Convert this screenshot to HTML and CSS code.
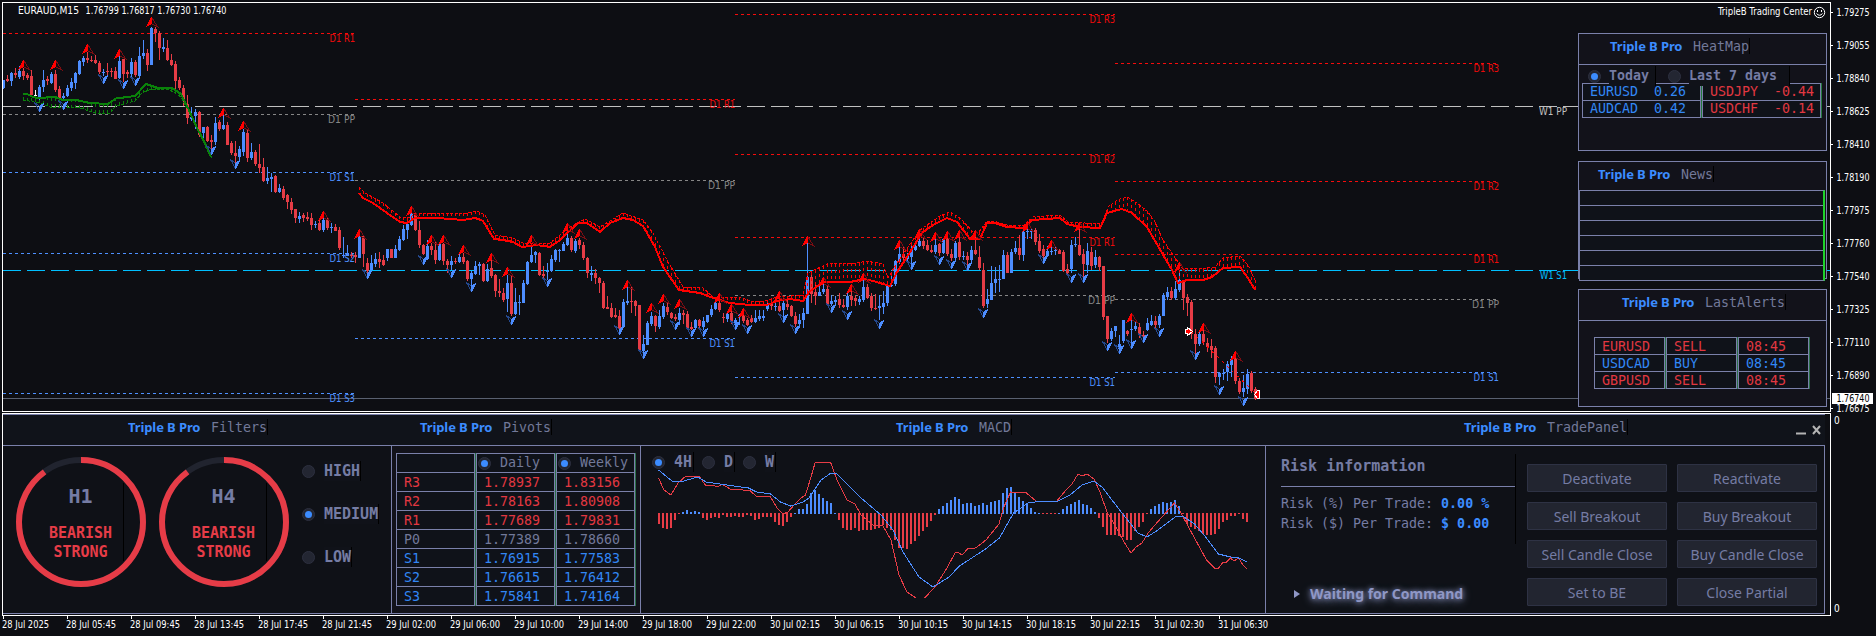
FILE: index.html
```html
<!DOCTYPE html>
<html lang="en">
  <head>
    <meta charset="UTF-8" />
    <meta name="viewport" content="width=device-width, initial-scale=1.0" />
    <title>EURAUD,M15</title>
    <link rel="stylesheet" href="styles.css">
  </head>
  <body>
    <div class="screen">
      <svg class="chart" id="chart" width="1876" height="413"></svg>

      <aside class="widgets">
        <section class="widget heatmap">
          <h2 class="title"><b>Triple B Pro</b><span>HeatMap</span></h2>
          <div class="heat-body">
            <div class="radios">
              <label class="option"><i class="radio on"></i><span>Today</span></label>
              <label class="option"><i class="radio"></i><span>Last 7 days</span></label>
            </div>
            <div class="heat-table">
              <div class="heat-col up">
                <p><span>EURUSD</span><span>0.26</span></p>
                <p><span>AUDCAD</span><span>0.42</span></p>
              </div>
              <div class="heat-col down">
                <p><span>USDJPY</span><span>-0.44</span></p>
                <p><span>USDCHF</span><span>-0.14</span></p>
              </div>
            </div>
          </div>
        </section>

        <section class="widget news">
          <h2 class="title"><b>Triple B Pro</b><span>News</span></h2>
          <div class="news-table">
            <p></p><p></p><p></p><p></p><p></p><p></p>
          </div>
        </section>

        <section class="widget alerts">
          <h2 class="title"><b>Triple B Pro</b><span>LastAlerts</span></h2>
          <div class="alerts-body">
            <div class="alert-col">
              <p class="down">EURUSD</p><p class="up">USDCAD</p><p class="down">GBPUSD</p>
            </div>
            <div class="alert-col">
              <p class="down">SELL</p><p class="up">BUY</p><p class="down">SELL</p>
            </div>
            <div class="alert-col">
              <p class="down">08:45</p><p class="up">08:45</p><p class="down">08:45</p>
            </div>
          </div>
        </section>
      </aside>

      <div class="lower">
        <main class="dock">
          <section class="panel filters">
            <h2 class="title"><b>Triple B Pro</b><span>Filters</span></h2>
            <div class="panel-body">
              <div class="gauge">
                <svg width="130" height="130" viewBox="0 0 130 130">
                  <circle class="track" cx="65" cy="65" r="62" />
                  <circle class="value" cx="65" cy="65" r="62" pathLength="100" transform="rotate(-90 65 65)" />
                </svg>
                <div class="gauge-text"><strong>H1</strong><span>BEARISH</span><span>STRONG</span></div>
              </div>
              <div class="gauge">
                <svg width="130" height="130" viewBox="0 0 130 130">
                  <circle class="track" cx="65" cy="65" r="62" />
                  <circle class="value" cx="65" cy="65" r="62" pathLength="100" transform="rotate(-90 65 65)" />
                </svg>
                <div class="gauge-text"><strong>H4</strong><span>BEARISH</span><span>STRONG</span></div>
              </div>
              <div class="levels">
                <label class="option"><i class="radio"></i><span>HIGH</span></label>
                <label class="option"><i class="radio on"></i><span>MEDIUM</span></label>
                <label class="option"><i class="radio"></i><span>LOW</span></label>
              </div>
            </div>
          </section>

          <section class="panel pivots">
            <h2 class="title"><b>Triple B Pro</b><span>Pivots</span></h2>
            <div class="panel-body">
              <div class="pivot-col">
                <p></p>
                <p class="down">R3</p><p class="down">R2</p><p class="down">R1</p>
                <p>P0</p>
                <p class="up">S1</p><p class="up">S2</p><p class="up">S3</p>
              </div>
              <div class="pivot-col">
                <p class="head"><i class="radio on"></i>Daily</p>
                <p class="down">1.78937</p><p class="down">1.78163</p><p class="down">1.77689</p>
                <p>1.77389</p>
                <p class="up">1.76915</p><p class="up">1.76615</p><p class="up">1.75841</p>
              </div>
              <div class="pivot-col">
                <p class="head"><i class="radio on"></i>Weekly</p>
                <p class="down">1.83156</p><p class="down">1.80908</p><p class="down">1.79831</p>
                <p>1.78660</p>
                <p class="up">1.77583</p><p class="up">1.76412</p><p class="up">1.74164</p>
              </div>
            </div>
          </section>

          <section class="panel macd">
            <h2 class="title"><b>Triple B Pro</b><span>MACD</span></h2>
            <div class="panel-body">
              <div class="radios">
                <label class="option"><i class="radio on"></i><span>4H</span></label>
                <label class="option"><i class="radio"></i><span>D</span></label>
                <label class="option"><i class="radio"></i><span>W</span></label>
              </div>
              <svg id="macd" width="624" height="167" viewBox="641 446 624 167"></svg>
            </div>
          </section>

          <section class="panel trade">
            <h2 class="title">
              <b>Triple B Pro</b><span>TradePanel</span>
              <svg class="window-buttons" width="28" height="14" viewBox="0 0 28 14">
                <path d="M1 10.5H11" stroke-width="2" />
                <path d="M18 3L25 11M25 3L18 11" stroke-width="2" />
              </svg>
            </h2>
            <div class="panel-body">
              <div class="risk">
                <div class="risk-box">
                  <h3>Risk information</h3>
                  <p>Risk (%) Per Trade: <b>0.00 %</b></p>
                  <p>Risk ($) Per Trade: <b>$ 0.00</b></p>
                </div>
                <div class="status">
                  <svg width="7" height="8"><path d="M0 0L6 4L0 8Z" /></svg>
                  <span>Waiting for Command</span>
                </div>
              </div>
              <div class="actions">
                <button>Deactivate</button><button>Reactivate</button>
                <button>Sell Breakout</button><button>Buy Breakout</button>
                <button>Sell Candle Close</button><button>Buy Candle Close</button>
                <button>Set to BE</button><button>Close Partial</button>
              </div>
            </div>
          </section>
        </main>
        <div class="scale"><span>0</span><span>0</span></div>
      </div>

      <svg class="time-axis" id="time" width="1876" height="20"></svg>
    </div>
    <script src="chart.js"></script>
  </body>
</html>
```
FILE: styles.css
```css
* {
  box-sizing: border-box;
}
body {
  margin: 0;
  background: #0d0e13;
  font-family: "Noto Sans", "Open Sans", sans-serif;
}
p,
h2,
h3 {
  margin: 0;
  font-weight: normal;
}
.screen {
  position: relative;
  width: 1876px;
  height: 636px;
  overflow: hidden;
}
.chart,
.time-axis {
  display: block;
}
.chart text,
.time-axis text {
  font: 10px "DejaVu Sans Condensed", "DejaVu Sans", sans-serif;
  fill: #fff;
}
.chart .r {
  fill: #f00a0a;
}
.chart .s {
  fill: #4d90ff;
}
.chart .pp {
  fill: #868686;
}
.chart .wpp {
  fill: #c0c0c0;
}
.chart .ws {
  fill: #00bfff;
}
.chart .price-now {
  fill: #000;
}

/* shared bits */
.up {
  color: #3287f5;
}
.down {
  color: #e23841;
}
.title {
  display: flex;
  align-items: center;
  font-size: 13px;
}
.title b {
  width: 83px;
  color: #3c8cff;
  letter-spacing: -0.1px;
  white-space: nowrap;
}
.title span {
  height: 16px;
  font: 13.3px/17px "DejaVu Sans Mono", monospace;
  color: #727999;
  border-right: 1px solid #000;
}
.radio {
  flex: none;
  display: flex;
  align-items: center;
  justify-content: center;
  width: 13px;
  height: 13px;
  border-radius: 50%;
  background: #232632;
  border: 1px solid #2d3040;
}
.radio.on::after {
  content: "";
  width: 7px;
  height: 7px;
  border-radius: 50%;
  background: #3c8cff;
}
.option {
  display: flex;
  align-items: center;
  font: bold 15px/20px "DejaVu Sans Mono", monospace;
  color: #757ca4;
}
.option span {
  margin-left: 9px;
  border-right: 1px solid #000;
  background: #101219;
}

/* widgets over the chart */
.widgets {
  position: absolute;
  left: 1578px;
  top: 33px;
  width: 249px;
}
.widget {
  border: 1px solid #7a80aa;
  background: #12121a;
}
.widget .title {
  height: 30px;
}
.heatmap {
  height: 118px;
}
.heatmap .title {
  padding: 0 0 7px 31px;
}
.heat-body {
  border-top: 1px solid #7a80aa;
  padding: 1px 3px 0;
}
.heat-body .radios {
  position: relative;
  display: flex;
  padding-left: 6px;
  gap: 12px;
}
.heat-body .option {
  font-size: 13.3px;
}
.heat-body .option span {
  margin-left: 8px;
  padding-right: 6px;
}
.heat-body .option:last-child span {
  padding-right: 12px;
}
.heat-table {
  display: flex;
  width: 240px;
  gap: 1px;
  margin-top: -3px;
  background: #237a3c;
  border-right: 1px solid #237a3c;
}
.heat-col,
.alert-col,
.pivot-col {
  font: 13.3px/16px "DejaVu Sans Mono", monospace;
  border: 1px solid #7a80aa;
  background: #0f1219;
}
.heat-col {
  flex: 1;
}
.heat-col p {
  display: flex;
  justify-content: space-between;
  height: 16px;
  padding: 0 14px 0 7px;
}
.heat-col.down p {
  padding-right: 6px;
}
.heat-col p + p,
.alert-col p + p,
.pivot-col p + p {
  height: 17px;
  border-top: 1px solid #7a80aa;
}
.news {
  margin-top: 10px;
  height: 118px;
}
.news .title {
  height: 28px;
  padding: 0 0 4px 19px;
}
.news-table {
  width: 246px;
  border: 1px solid #7a80aa;
  border-right: 2px solid #1ed22a;
  background: #0f1219;
}
.news-table p {
  height: 14px;
}
.news-table p + p {
  height: 15px;
  border-top: 1px solid #7a80aa;
}
.alerts {
  margin-top: 10px;
  height: 118px;
}
.alerts .title {
  padding: 0 0 6px 43px;
}
.alerts-body {
  display: flex;
  gap: 1px;
  height: 86px;
  padding: 16px 17px 17px 15px;
  border-top: 1px solid #7a80aa;
}
.alert-col {
  width: 71px;
  height: 52px;
}
.alert-col,
.pivot-col {
  box-shadow: 1px 0 #2a7048;
}
.alert-col p {
  height: 16px;
  padding-left: 7px;
  line-height: 17px;
}

/* lower terminal */
.lower {
  display: flex;
}
.dock {
  display: flex;
  width: 1829px;
  height: 203px;
  margin-left: 2px;
  border: 1px solid #fff;
}
.panel .title {
  height: 32px;
  padding-bottom: 6px;
  border-top: 1px solid #7a80aa;
  border-bottom: 1px solid #7a80aa;
  background: #10131a;
}
.panel-body {
  position: relative;
  display: flex;
  height: 168px;
  border-right: 1px solid #7a80aa;
  border-bottom: 1px solid #7a80aa;
  background: #0f1117;
}
.filters {
  width: 389px;
}
.filters .title {
  padding-left: 125px;
}
.filters .panel-body {
  padding: 11px 0 0 13px;
  gap: 13px;
}
.gauge {
  position: relative;
  width: 130px;
  height: 130px;
}
.gauge circle {
  fill: none;
  stroke-width: 6;
}
.gauge .track {
  stroke: #21242f;
}
.gauge .value {
  stroke: #e63c47;
  stroke-dasharray: 90 100;
}
.gauge-text {
  position: absolute;
  top: 26px;
  left: 22px;
  width: 86px;
  height: 78px;
  display: flex;
  flex-direction: column;
  align-items: center;
  border-right: 1px solid #000;
  font: bold 15px/19px "DejaVu Sans Mono", monospace;
  color: #e63c47;
}
.gauge-text strong {
  margin: 1px 0 16px;
  font-size: 20px;
  line-height: 24px;
  color: #757ca4;
}
.levels {
  display: flex;
  flex-direction: column;
  gap: 23px;
  padding-top: 4px;
}
.pivots {
  width: 249px;
}
.pivots .title {
  padding-left: 28px;
}
.pivots .panel-body {
  gap: 1px;
  padding: 7px 4px;
  background: #12121a;
}
.pivot-col {
  width: 79px;
  height: 153px;
  font-size: 13.3px;
  line-height: 20px;
  color: #727999;
}
.pivot-col p {
  height: 18px;
  padding-left: 7px;
}
.pivot-col p + p {
  height: 19px;
}
.pivot-col .head {
  display: flex;
  align-items: center;
  gap: 9px;
  padding-left: 1px;
}
.macd {
  width: 625px;
}
.macd .title {
  padding-left: 255px;
}
.macd .radios {
  position: absolute;
  top: 6px;
  left: 11px;
  display: flex;
  gap: 8px;
}
.macd .option span {
  padding-right: 1px;
}
.macd svg {
  display: block;
}
.trade {
  width: 559px;
}
.trade .title {
  padding-left: 198px;
}
.window-buttons {
  margin: 6px 2px 0 auto;
  fill: none;
  stroke: #b4b4b4;
}
.trade .panel-body {
  padding: 8px 7px 10px 15px;
}
.risk {
  display: flex;
  flex-direction: column;
  justify-content: space-between;
  width: 246px;
}
.risk-box {
  width: 235px;
  height: 90px;
  border-right: 1px solid #000;
  font: 13.3px/20px "DejaVu Sans Mono", monospace;
  color: #757ca4;
}
.risk-box h3 {
  height: 33px;
  margin-bottom: 7px;
  border-bottom: 1px solid #7a80aa;
  font: bold 15px/24px "DejaVu Sans Mono", monospace;
}
.risk-box b {
  color: #3c8cff;
}
.status {
  display: flex;
  align-items: center;
  gap: 9px;
  padding: 0 0 0 13px;
  font-size: 14px;
  font-weight: bold;
  line-height: 18px;
  color: #8f97c6;
}
.status svg {
  fill: #8f97c6;
}
.status span {
  text-shadow: 0 0 5px #7a80aa, 0 2px 8px #7a80aa;
}
.actions {
  display: grid;
  grid-template-columns: 140px 140px;
  grid-auto-rows: 28px;
  gap: 10px;
  padding-top: 10px;
}
.actions button {
  padding: 0;
  border: 1px solid #2e3244;
  border-radius: 1px;
  background: #222530;
  color: #757ca4;
  font: 14px "Noto Sans", sans-serif;
}
.scale {
  display: flex;
  flex-direction: column;
  justify-content: space-between;
  height: 203px;
  padding: 2px 0 1px 3px;
  font: 10px/12px "DejaVu Sans Condensed", sans-serif;
  color: #fff;
}
```
FILE: chart.js
```js
const BLUE = "#4d8dff";
const RED = "#e63c46";

// one candle per entry: direction, high, body top, body bottom, low
const candles = `
u80,80,88,89 d75,79,81,82 u72,73,81,86 d68,73,75,78 u66,71,77,79 d68,71,76,80 d73,75,78,80 d70,76,95,97 w90,95,96,102 u85,87,97,100
u70,80,87,92 d76,79,81,85 u72,74,83,84 d70,74,90,92 d86,89,98,99 u93,96,98,101 u85,88,96,97 u78,82,88,91 u72,73,83,89 u60,61,74,75
u56,58,62,66 d52,58,60,63 d56,60,61,62 d55,60,63,64 d61,63,72,74 u69,72,73,76 d63,71,72,76 d68,71,72,77 d67,71,79,79 u55,61,78,79
d59,59,74,82 d70,72,74,78 u58,62,74,77 d60,62,75,77 u47,56,76,77 u40,53,56,59 d49,53,65,71 u27,28,65,65 d27,29,33,42 d31,33,48,60
u38,47,49,52 d40,48,60,61 d54,60,65,66 d61,64,81,89 d77,80,88,90 d85,88,101,106 d95,104,118,124 u107,117,119,121 u109,112,116,129 d111,112,135,137
u127,127,133,143 d126,127,141,142 d135,140,142,150 u117,123,142,145 d120,122,129,131 u114,125,129,130 d122,125,145,145 d141,143,153,155 d141,153,156,166 u146,149,157,162
u129,132,152,156 d130,133,158,162 u143,152,158,160 d150,152,164,166 d144,164,168,173 d158,167,181,182 u167,178,181,184 u173,177,179,192 d175,176,192,193 u184,188,192,193
d186,189,198,200 d194,195,202,209 d198,202,210,214 d209,209,218,223 u212,216,219,223 d213,215,218,222 d212,217,219,221 d213,218,225,230 u221,224,225,228 d219,223,230,231
u217,220,230,232 d218,219,228,230 u223,227,228,233 d224,227,231,231 d227,230,248,250 u237,255,256,258 u245,253,256,256 d252,255,256,258 d252,255,257,263 u234,236,258,258
d236,236,254,267 d258,263,271,276 u255,263,270,271 u253,259,264,267 d252,259,262,268 d255,260,265,266 u249,249,258,261 d249,249,258,258 u245,249,258,258 u236,239,250,251
u225,229,240,241 u223,224,230,239 u212,213,225,226 d212,213,230,231 d221,230,245,248 d244,245,254,255 u240,246,259,260 d243,246,250,255 d241,250,260,264 u243,244,260,261
d243,244,261,265 d259,261,265,273 u256,261,265,270 d258,261,262,264 u253,257,262,263 d253,257,262,264 d260,261,279,281 u271,273,279,286 u261,266,274,275 u262,264,266,275
d263,264,281,282 u264,269,281,282 d259,268,276,278 d274,275,291,297 d279,291,293,297 d288,293,300,302 u275,283,299,312 d275,283,314,316 u288,302,314,315 u295,302,303,315
u280,283,303,303 u261,262,284,285 u247,255,262,263 u251,252,255,263 d252,253,275,276 d266,274,276,280 u263,271,272,280 u255,259,271,272 u249,250,260,262 u249,250,251,262
u242,244,251,251 u233,238,245,246 d236,238,250,252 u239,241,251,253 d238,240,245,249 d242,245,258,260 d257,258,273,278 u266,273,275,281 d269,273,278,284 d277,278,283,293
d281,283,308,309 d296,307,309,309 d303,308,317,318 d308,315,317,318 d310,316,328,330 u299,302,327,328 u286,301,303,305 d287,301,302,313 d300,301,306,316 d305,305,351,352
u335,344,351,355 u321,323,345,345 u312,316,324,326 d315,316,326,332 u310,316,327,329 u303,306,317,319 d303,307,312,315 d312,313,318,319 d314,317,319,321 u308,313,320,325
d310,313,315,324 d311,314,328,330 d322,327,329,330 u319,320,328,330 d319,320,326,329 u317,321,327,330 u315,315,322,323 u305,309,315,317 u301,303,309,310 d301,303,310,312
d313,317,318,323 u311,314,319,322 d310,313,321,324 u318,320,325,326 u314,315,316,325 d314,315,321,323 d318,320,325,326 d315,318,322,323 u310,318,322,323 u310,316,319,321
u310,316,318,321 u303,304,309,311 d301,304,306,310 u303,306,307,311 d300,306,311,312 u300,303,310,318 d300,304,307,310 d305,306,316,317 d312,316,324,327 u314,320,324,328
u308,313,320,328 u241,277,314,314 d275,277,294,303 d285,292,296,305 u283,292,296,296 u281,289,292,294 d286,289,304,304 u295,301,304,306 u296,300,302,305 d293,299,305,308
d299,305,307,308 u293,296,307,310 d290,296,300,306 d295,298,301,306 u296,299,302,305 u280,287,300,302 d284,287,298,299 d293,296,308,311 d294,308,309,310 u295,306,308,320
u291,303,307,314 u285,286,303,306 u273,285,286,287 u260,261,284,286 u245,254,262,264 d246,254,258,260 u253,256,259,262 u246,250,257,264 u242,246,250,251 u234,241,246,247
d237,241,246,249 d240,245,250,251 d245,250,252,253 u236,245,252,254 d243,244,253,256 u238,239,253,254 d237,239,254,256 d249,254,258,261 u241,243,258,260 d236,242,257,260
u251,256,257,260 d252,256,260,265 u246,250,260,262 d236,250,254,255 d246,257,268,270 d263,270,306,308 u289,299,304,308 u266,283,300,300 u267,279,283,293 u265,279,280,292
u250,255,279,279 d252,255,273,273 u249,252,273,273 u241,248,252,254 d235,248,255,260 u229,232,255,261 u225,231,232,239 u228,230,232,239 d228,230,242,245 d234,241,251,253
d245,249,256,260 u246,251,256,257 u247,251,252,255 u246,250,251,255 d249,250,254,254 d250,252,271,272 d264,269,273,274 u240,245,269,273 u237,244,245,247 d229,245,255,256
d249,254,264,277 u243,251,265,273 d247,252,266,270 u250,257,265,268 d256,257,267,271 d266,266,317,320 d316,316,339,343 u328,331,339,341 u326,326,331,337 u335,344,349,350
u320,320,341,343 d330,331,334,336 u318,329,330,343 u322,326,329,331 d323,327,334,338 d331,335,337,338 u318,323,330,331 u315,321,325,326 d316,321,325,328 u314,316,325,328
u293,295,316,316 u287,292,297,300 d287,291,298,300 u281,289,298,300 u270,280,290,292 d281,282,298,310 d294,297,303,316 d300,302,334,339 d329,334,344,354 u331,334,344,346
d329,334,342,345 d338,343,347,352 d339,346,350,358 d346,348,377,383 u372,373,377,385 u369,373,374,380 u361,364,372,381 u356,359,365,377 d357,359,381,384 d378,381,392,394
u375,388,392,397 u369,374,389,394 d371,373,391,393 d387,389,399,400`.trim().split(/\s+/);

// fractal arrows, x and y of the tip
const arrowsUp = [[23,60],[55,60],[87,44],[119,49],[151,17],[223,108],[243,121],[323,211],[359,229],[411,206],[431,235],[443,235],[463,245],[491,253],[507,267],[531,235],[567,223],[579,229],[627,280],[651,303],[663,294],[679,299],[719,293],[731,304],[743,308],[779,291],[807,236],[823,277],[851,284],[863,273],[899,240],[919,229],[935,232],[947,231],[959,230],[975,230],[1027,222],[1051,240],[1079,222],[1131,313],[1179,262],[1203,323],[1235,351]];
const arrowsDown = [[39,112],[63,110],[103,84],[123,89],[135,86],[211,155],[235,169],[367,279],[423,265],[451,278],[471,292],[511,325],[547,287],[619,335],[643,359],[675,330],[691,337],[703,337],[735,330],[747,334],[783,323],[795,334],[831,313],[847,320],[879,329],[911,270],[939,265],[951,269],[967,271],[983,318],[1043,264],[1071,283],[1083,283],[1107,351],[1119,354],[1131,349],[1143,343],[1159,337],[1195,360],[1219,395],[1243,406]];

// trend stop: solid line and its dashed outer edge
const greenLine = "23,94 27,94 33,97 38,98 55,97 63,100 74,99.5 90,103 108,104 116,98.5 135,96 146,84 158,88 172,88 181,94 188,108 197,128 205,143 211,157";
const greenEdge = "23,100 40,103 50,107 80,108 95,113 110,113 116,106 135,101 142,93 150,89.5 170,90 181,97 190,114 211,158";
const redLine = "359,193 363,198 373,203 387,213 400,222 407,223 415,218 437,218 463,220 475,218 483,221 494,239 503,240 513,242 522,247 537,245 550,247 560,240 578,223 587,223 600,232 610,223 623,218 633,220 643,226 655,247 663,267 679,290 700,293 713,298 730,303 750,305 767,305 777,301 790,299 803,301 809,292 823,282 850,282 865,279 873,281 890,286 897,272 907,257 922,233 933,225 947,218 957,222 970,239 980,239 987,223 995,223 1007,227 1023,228 1032,220 1060,218 1067,224 1080,227 1100,228 1107,213 1122,209 1132,213 1147,227 1162,253 1172,270 1178,283 1187,280 1203,280 1212,277 1223,268 1240,267 1248,278 1255,290";
const redEdge = "359,187 365,193 383,203 400,217 410,218 415,213 467,213 477,211 485,215 495,235 513,238 523,243 550,243 570,227 585,219 600,227 623,213 643,220 653,233 667,260 683,287 702,287 713,297 740,297 750,301 765,301 777,297 803,295 808,273 827,264 857,263 867,261 883,264 888,278 897,263 920,230 940,216 950,212 960,218 973,232 979,232 987,221 997,222 1007,225 1023,226 1033,217 1060,215 1068,222 1102,224 1108,207 1117,200 1127,197 1137,203 1148,212 1155,222 1163,240 1182,268 1200,269 1215,267 1223,258 1240,256 1248,265 1255,280";

// daily pivots: x start, x end, y, label
const pivots = [
  [3, 355, 33, "D1 R1"], [3, 355, 114, "D1 PP"], [3, 355, 172, "D1 S1"], [3, 355, 253, "D1 S2"], [3, 355, 393, "D1 S3"],
  [355, 735, 99, "D1 R1"], [355, 735, 180, "D1 PP"], [355, 735, 338, "D1 S1"],
  [735, 1115, 14, "D1 R3"], [735, 1115, 154, "D1 R2"], [735, 1115, 237, "D1 R1"], [735, 1115, 295, "D1 PP"], [735, 1115, 377, "D1 S1"],
  [1115, 1499, 63, "D1 R3"], [1115, 1499, 181, "D1 R2"], [1115, 1499, 254, "D1 R1"], [1115, 1499, 299, "D1 PP"], [1115, 1499, 372, "D1 S1"]
];

function text(x, y, w, str, cls) {
  return `<text x="${x}" y="${y}" textLength="${w}" lengthAdjust="spacingAndGlyphs" class="${cls || ""}">${str}</text>`;
}

function hline(x1, x2, y, color, dash) {
  return `<path d="M${x1} ${y + 0.5}H${x2}" stroke="${color}" stroke-dasharray="${dash || "none"}" fill="none"/>`;
}

function points(str) {
  return str.split(" ").map(p => p.split(",").map(Number));
}

function yAt(pts, x) {
  for (let i = 1; i < pts.length; i++) {
    if (x <= pts[i][0]) {
      const [x0, y0] = pts[i - 1];
      const [x1, y1] = pts[i];
      return y0 + (y1 - y0) * (x - x0) / (x1 - x0);
    }
  }
  return pts[pts.length - 1][1];
}

function trend(line, edge, color) {
  const a = points(line);
  const b = points(edge);
  let out = `<polyline points="${line}" fill="none" stroke="${color}" stroke-width="2"/>`;
  out += `<polyline points="${edge}" fill="none" stroke="${color}" stroke-dasharray="3 1.5"/>`;
  for (let x = a[0][0]; x <= a[a.length - 1][0]; x += 4) {
    out += `<path d="M${x + 0.5} ${Math.round(yAt(b, x))}V${Math.round(yAt(a, x))}" stroke="${color}" stroke-dasharray="3 3"/>`;
  }
  return out;
}

function drawChart() {
  let s = "";
  s += hline(3, 1830, 398, "#596070");
  s += hline(3, 1830, 106, "#c0c0c0", "18 6");
  s += hline(3, 1830, 270, "#00bfff", "18 6");
  s += text(1539, 115, 28, "W1 PP", "wpp") + text(1540, 279, 27, "W1 S1", "ws");

  pivots.forEach(([x1, x2, y, label]) => {
    const type = label[3];
    const color = type == "R" ? "#f50c0c" : type == "S" ? "#4d90ff" : "#868686";
    const w = type == "P" ? 27 : 25.5;
    s += hline(x1, type == "P" || x2 < 1499 ? x2 : 1497, y, color, "3 3");
    s += text(x2 - w, y + 9, w, label, type == "R" ? "r" : type == "S" ? "s" : "pp");
  });

  candles.forEach((c, i) => {
    const [high, top, bottom, low] = c.slice(1).split(",").map(Number);
    const x = 3 + i * 4;
    const color = c[0] == "u" ? BLUE : c[0] == "d" ? RED : "#fff";
    s += `<rect x="${x}" y="${high}" width="1" height="${low - high}" fill="${color}"/>`;
    s += `<rect x="${i ? x - 1 : x}" y="${top}" width="${i ? 3 : 2}" height="${Math.max(1, bottom - top)}" fill="${color}"/>`;
  });

  s += trend(greenLine, greenEdge, "#0a820a");
  s += trend(redLine, redEdge, "#ff0000");

  arrowsUp.forEach(([x, y]) => {
    s += `<path d="M${x} ${y}L${x - 5} ${y + 10}L${x + 1} ${y + 7}V${y}Z" fill="#ff0000"/>`;
    s += `<path d="M${x + 1} ${y + 1}L${x + 6.5} ${y + 9.5}L${x + 1} ${y + 7}" fill="none" stroke="#7c0d12"/>`;
  });
  arrowsDown.forEach(([x, y]) => {
    s += `<path d="M${x + 1} ${y}L${x + 5.5} ${y - 9.5}L${x} ${y - 6}V${y}Z" fill="#4d8dff"/>`;
    s += `<path d="M${x} ${y - 1}L${x - 4.5} ${y - 9.5}L${x} ${y - 6}" fill="none" stroke="#23478c"/>`;
  });

  // open position
  s += `<path d="M1192 332L1256 394" stroke="#ff0000" stroke-dasharray="2 5"/>`;
  s += `<path d="M1185.5 329.5H1187.5V327.5L1192.5 331.5L1187.5 335.5V333.5H1185.5Z" fill="#ff0000" stroke="#fff"/>`;
  s += `<path d="M1259.5 390.5V398.5H1257.5L1254.5 394.5L1257.5 390.5Z" fill="#ff0000" stroke="#fff"/>`;

  // frame and price scale
  s += `<rect x="2.5" y="2.5" width="1828" height="409" fill="none" stroke="#fff"/>`;
  const prices = ["1.79275", "1.79055", "1.78840", "1.78625", "1.78410", "1.78190", "1.77975", "1.77760", "1.77540", "1.77325", "1.77110", "1.76890", "1.76675"];
  prices.forEach((p, i) => {
    s += hline(1831, 1833, 12 + i * 33, "#fff") + text(1836.5, 16 + i * 33, 33, p);
  });
  s += `<rect x="1832" y="393" width="41" height="11" fill="#fff"/>` + text(1836.5, 402, 33, "1.76740", "price-now");

  s += text(18, 14, 61, "EURAUD,M15") + text(85.5, 14, 141, "1.76799 1.76817 1.76730 1.76740");
  s += text(1718, 15, 94, "TripleB Trading Center");
  s += `<g fill="none" stroke="#fff" shape-rendering="auto"><circle cx="1819.5" cy="12.5" r="5.2"/><path d="M1816.5 13.5Q1819.5 17 1822.5 13.5"/><path d="M1817.5 10V12M1821.5 10V12"/></g>`;
  document.querySelector("#chart").innerHTML = `<g shape-rendering="crispEdges">${s}</g>`;
}

const histogram = [-11,-15,-16,-15,-7,-1,2,4,2,3,2,-5,-7,-5,-4,-5,-2,-4,-4,-3,-4,-4,-2,-3,-7,-6,-4,-4,-4,-9,-12,-13,-9,-4,1,5,5,10,21,24,20,16,13,11,1,-7,-15,-17,-17,-15,-18,-17,-17,-17,-16,-15,-12,-15,-17,-27,-35,-35,-36,-31,-28,-23,-18,-14,-8,-2,5,8,11,14,17,15,10,11,11,8,9,11,9,12,13,14,21,26,27,22,17,13,11,6,2,1,-1,-1,-1,-1,1,5,8,10,12,14,10,9,6,2,-5,-14,-22,-22,-22,-23,-24,-27,-27,-18,-14,-9,-1,5,8,10,12,11,12,14,8,-1,-11,-14,-16,-18,-21,-22,-22,-21,-16,-9,-7,-3,-3,-1,-6,-9];
const macdRed = [
  "658.5,478 664,490 671,495 678,483 686,476 699,476 706,486 712,485 718,487 722,484 730,489 736,489 750.5,491 756,496 770.5,497 777,508 783,514 788,512 795,504 801,498 805.5,495 811,477 815,463 823,462 830.5,462 837,480 847,500 855,504 861,515 873,525 883,526 891,540 899,575 907,592 916,598",
  "924.5,598 935,587 947,568 955,553 958,552 962,555 967.5,549 975.5,548 986,540 999,524 1003.5,508 1010.5,492 1026.5,493 1036,501 1056,502 1066,490 1072,484 1078,474 1082,476 1087,474 1094,479 1100,492 1107,512 1116,527 1124,542 1131,553 1136,547 1142,543 1148,533 1162,517 1174.5,503 1180.5,512 1194.5,538 1206.5,560 1214.5,568 1218.5,568 1222.5,563 1226.5,562 1230.5,558 1234,561 1238.5,558 1243,565 1247,569"
];
const macdBlue = "658.5,470 672,481 680,482 698,477 706,482 748.5,488 756.5,492 770.5,494 780.5,502 790.5,506 803,502 809,498 821,480 831,473 837,474 845,482 861,498 881,515 893,530 903,552 919,577 933,587 949,577 959.5,566 985.5,549 999.5,538 1013.5,513 1028,503 1042,501 1056,502 1070,495 1082,485 1094,481 1102,487 1122,513 1138,533 1147,537 1158,530 1176.5,516 1182.5,516 1194.5,524 1206.5,538 1218.5,554 1230.5,557 1238.5,558 1247,562";

function drawMacd() {
  let s = "";
  histogram.forEach((v, i) => {
    s += `<rect x="${658 + i * 4}" y="${v > 0 ? 514 - v : 513}" width="2" height="${Math.abs(v)}" fill="${v > 0 ? BLUE : RED}"/>`;
  });
  macdRed.forEach(p => {
    s += `<polyline points="${p}" fill="none" stroke="${RED}"/>`;
  });
  s += `<polyline points="${macdBlue}" fill="none" stroke="${BLUE}"/>`;
  document.querySelector("#macd").innerHTML = `<g shape-rendering="crispEdges">${s}</g>`;
}

function drawTimeAxis() {
  const times = ["28 Jul 2025", "28 Jul 05:45", "28 Jul 09:45", "28 Jul 13:45", "28 Jul 17:45", "28 Jul 21:45", "29 Jul 02:00", "29 Jul 06:00", "29 Jul 10:00", "29 Jul 14:00", "29 Jul 18:00", "29 Jul 22:00", "30 Jul 02:15", "30 Jul 06:15", "30 Jul 10:15", "30 Jul 14:15", "30 Jul 18:15", "30 Jul 22:15", "31 Jul 02:30", "31 Jul 06:30"];
  let s = "";
  times.forEach((t, i) => {
    s += `<rect x="${3 + i * 64}" y="0" width="1" height="3" fill="#fff"/>`;
    s += text(2 + i * 64, 12, i ? 50 : 47, t);
  });
  document.querySelector("#time").innerHTML = s;
}

drawChart();
drawMacd();
drawTimeAxis();
```
